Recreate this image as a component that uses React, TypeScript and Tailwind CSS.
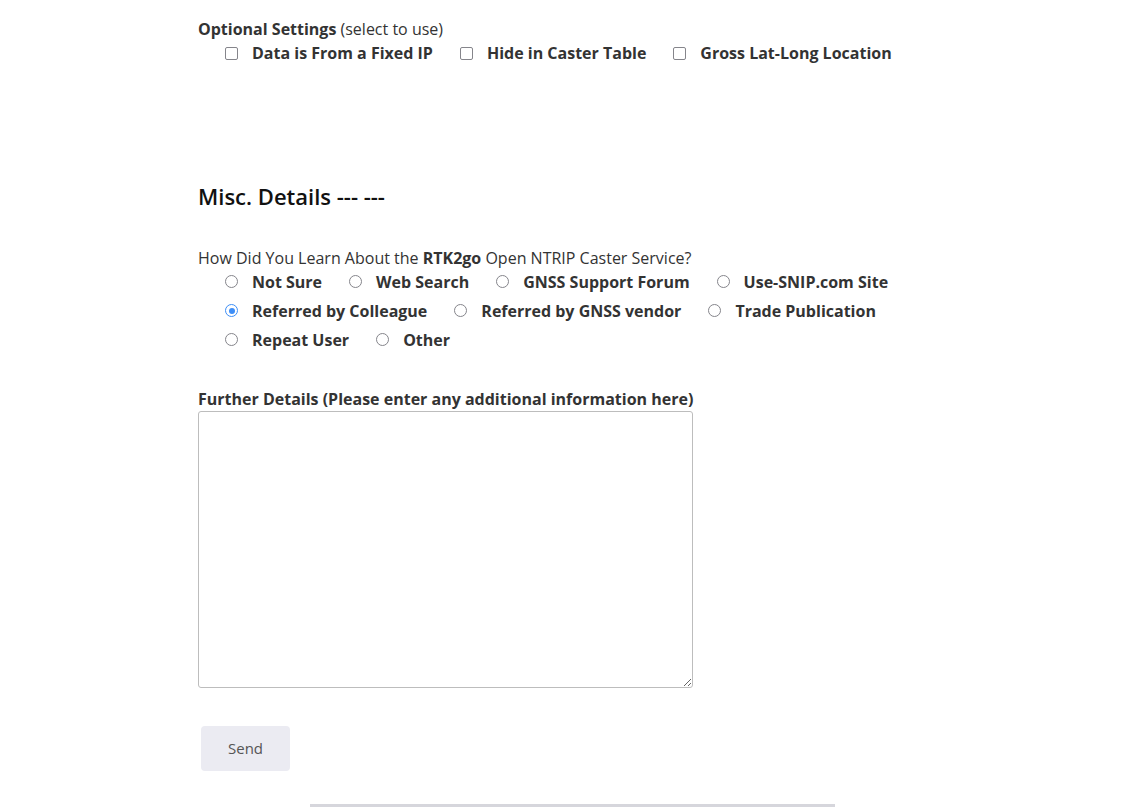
import React from "react";

const font = { fontFamily: '"Open Sans", "Noto Sans", sans-serif' };

function Check({ label }: { label: string }) {
  return (
    <label className="ml-[27px] flex items-center">
      <span className="box-border h-[13px] w-[13px] rounded-[2px] border-[1.5px] border-[#85858b] bg-white" />
      <span className="ml-[14px] font-bold text-[#333]">{label}</span>
    </label>
  );
}

function Radio({ label, checked }: { label: string; checked?: boolean }) {
  return (
    <label className="ml-[27px] flex items-center">
      {checked ? (
        <span className="box-border flex h-[13px] w-[13px] items-center justify-center rounded-full border-[1.5px] border-[#3d8ef7] bg-white">
          <span className="h-[6px] w-[6px] rounded-full bg-[#3d8ef7]" />
        </span>
      ) : (
        <span className="box-border h-[13px] w-[13px] rounded-full border-[1.5px] border-[#85858b] bg-white" />
      )}
      <span className="ml-[14px] font-bold text-[#333]">{label}</span>
    </label>
  );
}

export default function App() {
  return (
    <div className="min-h-[811px] w-[1127px] bg-white pl-[198px] text-[16px] text-[#333]" style={font}>
      <div className="pt-[17px] leading-[24px]">
        <span className="font-bold">Optional Settings</span> (select to use)
      </div>
      <div className="flex h-[24px] items-center">
        <Check label="Data is From a Fixed IP" />
        <Check label="Hide in Caster Table" />
        <Check label="Gross Lat-Long Location" />
      </div>

      <h2 className="mt-[117px] text-[22px] font-semibold leading-[28px] text-[#111]">Misc. Details --- ---</h2>

      <div className="mt-[37px] leading-[22px]">
        How Did You Learn About the <span className="font-bold">RTK2go</span> Open NTRIP Caster Service?
      </div>
      <div className="-mt-[2px] flex h-[29px] items-center">
        <Radio label="Not Sure" />
        <Radio label="Web Search" />
        <Radio label="GNSS Support Forum" />
        <Radio label="Use-SNIP.com Site" />
      </div>
      <div className="flex h-[29px] items-center">
        <Radio label="Referred by Colleague" checked />
        <Radio label="Referred by GNSS vendor" />
        <Radio label="Trade Publication" />
      </div>
      <div className="flex h-[29px] items-center">
        <Radio label="Repeat User" />
        <Radio label="Other" />
      </div>

      <div className="mt-[34px] font-bold leading-[22px]">
        Further Details (Please enter any additional information here)
      </div>
      <textarea
        className="mt-[1px] block h-[277px] w-[495px] rounded-[3px] border border-[#bdbdbd] bg-white"
        style={{ resize: "both" }}
      />

      <button className="mt-[38px] ml-[3px] block h-[45px] w-[89px] rounded-[4px] bg-[#ebebf2] text-[15px] text-[#555]">
        Send
      </button>

      <div className="ml-[112px] mt-[33px] h-[3px] w-[525px] bg-[#d6d6dc]" />
    </div>
  );
}
